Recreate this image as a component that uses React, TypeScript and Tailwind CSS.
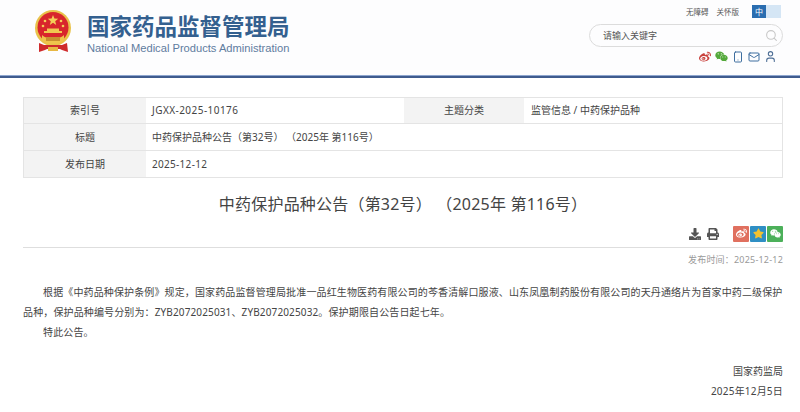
import { FaWeibo, FaWeixin, FaDownload, FaPrint, FaStar } from "react-icons/fa";
import { Search, Smartphone, Mail, User } from "lucide-react";

const font = { fontFamily: '"Noto Sans", "Noto Sans CJK SC", sans-serif' };

const Emblem = () => (
  <svg width="46" height="46" viewBox="0 0 46 46">
    <circle cx="23" cy="18" r="18" fill="#e9c24a" />
    <circle cx="23" cy="17.500" r="15.500" fill="#d8262c" />
    <path d="M23 5l1.400 3.600 3.800.2-3 2.400 1 3.700-3.200-2.100-3.200 2.100 1-3.700-3-2.400 3.800-.2z" fill="#f4cf58" />
    <circle cx="15" cy="11" r="1.300" fill="#f4cf58" />
    <circle cx="31" cy="11" r="1.300" fill="#f4cf58" />
    <circle cx="13" cy="16" r="1.300" fill="#f4cf58" />
    <circle cx="33" cy="16" r="1.300" fill="#f4cf58" />
    <path d="M14 21h18v2H14zM17 18.500h12v2.500H17z" fill="#f0c850" />
    <path d="M12 25c3 3 6 3 11 3s8 0 11-3v5c-3 3-7 4-11 4s-8-1-11-4z" fill="#efc44c" />
    <path d="M16 27h14v4H16z" fill="#c9902f" />
    <path d="M9 33l5 2h18l5-2 1 9-6-2-2-1H17l-2 1-6 2z" fill="#cf2a2c" />
    <path d="M18 37h10v4H18z" fill="#e8b844" />
  </svg>
);

const ShareIcon = ({ className, children }: { className: string; children: React.ReactNode }) => (
  <div className={`flex h-4 w-4 items-center justify-center rounded-[1px] text-[11px] ${className}`}>{children}</div>
);

const Row = ({ children, className }: { children: React.ReactNode; className: string }) => (
  <div className={`flex items-center ${className}`}>{children}</div>
);

const Label = ({ children, className = "w-[122px]" }: { children: React.ReactNode; className?: string }) => (
  <div className={`flex h-full items-center justify-center bg-[#f3f3f3] ${className}`}>{children}</div>
);

export default function App() {
  return (
    <div className="h-[412px] w-[800px] overflow-hidden bg-white text-[#444]" style={font}>
      <header className="flex h-[75px] items-start justify-between bg-[#fdfdfe] pl-[30px] pr-[17px]">
        <div className="flex items-start pt-[10px]">
          <Emblem />
          <div className="ml-[11px] flex flex-col pt-[3px]">
            <div className="text-[22.500px] leading-[27px] font-bold text-[#34608f]">国家药品监督管理局</div>
            <div className="mt-[1px] whitespace-nowrap text-[11.150px] leading-[14px] text-[#5f7c9e]" style={{ fontFamily: '"Liberation Sans", sans-serif' }}>
              National Medical Products Administration
            </div>
          </div>
        </div>
        <div className="flex w-[194px] flex-col items-end">
          <div className="flex items-center pt-[5px] pr-[2px] text-[7.500px] leading-[12px] text-[#555]">
            <span>无障碍</span>
            <span className="ml-[8px]">关怀版</span>
            <span className="ml-[13px] flex h-[13px] w-[14px] items-center justify-center bg-[#2a6db0] text-[8px] text-white">中</span>
            <span className="h-[13px] w-[15px] bg-[#d5e6f5]" />
          </div>
          <div className="mt-[6px] flex h-[23px] w-[194px] items-center justify-between rounded-full border border-[#dcdcdc] pl-[13px] pr-[4px] text-[9px] text-[#555]">
            <span>请输入关键字</span>
            <Search size={13} className="text-[#c8c8c8]" />
          </div>
          <div className="mt-[3px] flex items-center gap-[4px] pr-[6px]">
            <FaWeibo size={12} className="text-[#c9403c]" />
            <FaWeixin size={13} className="text-[#53a83a]" />
            <Smartphone size={12} className="text-[#3f6fa0]" />
            <Mail size={12} className="text-[#3f6fa0]" />
            <User size={13} className="text-[#4f6f96]" />
          </div>
        </div>
      </header>
      <div className="h-[3px] border-t border-[#8ea6cf] bg-[#3f5b8e]" />

      <main className="pl-[23px] pr-[17px] pt-[19px]">
        <div className="border border-[#e4e4e4] text-[10px]">
          <Row className="h-[26px] border-b border-[#e4e4e4]">
            <Label>索引号</Label>
            <div className="w-[258px] pl-[6px] tracking-[0.45px]">JGXX-2025-10176</div>
            <Label className="w-[120px]">主题分类</Label>
            <div className="pl-[7px]">监管信息 / 中药保护品种</div>
          </Row>
          <Row className="h-[27px] border-b border-[#e4e4e4]">
            <Label>标题</Label>
            <div className="pl-[6px]">中药保护品种公告（第32号） （2025年 第116号）</div>
          </Row>
          <Row className="h-[26px]">
            <Label>发布日期</Label>
            <div className="pl-[6px] tracking-[0.3px]">2025-12-12</div>
          </Row>
        </div>

        <h1 className="mt-[14px] text-center text-[16px] leading-[24px] font-normal tracking-[0.2px] text-[#444]">
          中药保护品种公告（第32号） （2025年 第116号）
        </h1>

        <div className="mt-[7px] flex h-[25px] items-center justify-end gap-[1px] border-b border-[#dedede] pb-[3px]">
          <FaDownload size={12} className="mr-[5px] text-[#555]" />
          <FaPrint size={12} className="mr-[13px] text-[#555]" />
          <ShareIcon className="bg-[#e0705f] text-white"><FaWeibo /></ShareIcon>
          <ShareIcon className="bg-[#2f8fc4] text-[#f2c230]"><FaStar /></ShareIcon>
          <ShareIcon className="bg-[#4cb05a] text-white"><FaWeixin /></ShareIcon>
        </div>
        <div className="mt-[5px] text-right text-[9px] leading-[14px] tracking-[0.2px] text-[#999]">发布时间：2025-12-12</div>

        <div className="mt-[15px] text-[10px] leading-[20px] tracking-[0.13px]">
          <p className="indent-[20px]">
            根据《中药品种保护条例》规定，国家药品监督管理局批准一品红生物医药有限公司的芩香清解口服液、山东凤凰制药股份有限公司的天丹通络片为首家中药二级保护品种，保护品种编号分别为：ZYB2072025031、ZYB2072025032。保护期限自公告日起七年。
          </p>
          <p className="indent-[20px]">特此公告。</p>
        </div>

        <div className="mt-[19px] text-right text-[10px] leading-[20px]">
          <p>国家药监局</p>
          <p className="tracking-[0.2px]">2025年12月5日</p>
        </div>
      </main>
    </div>
  );
}
